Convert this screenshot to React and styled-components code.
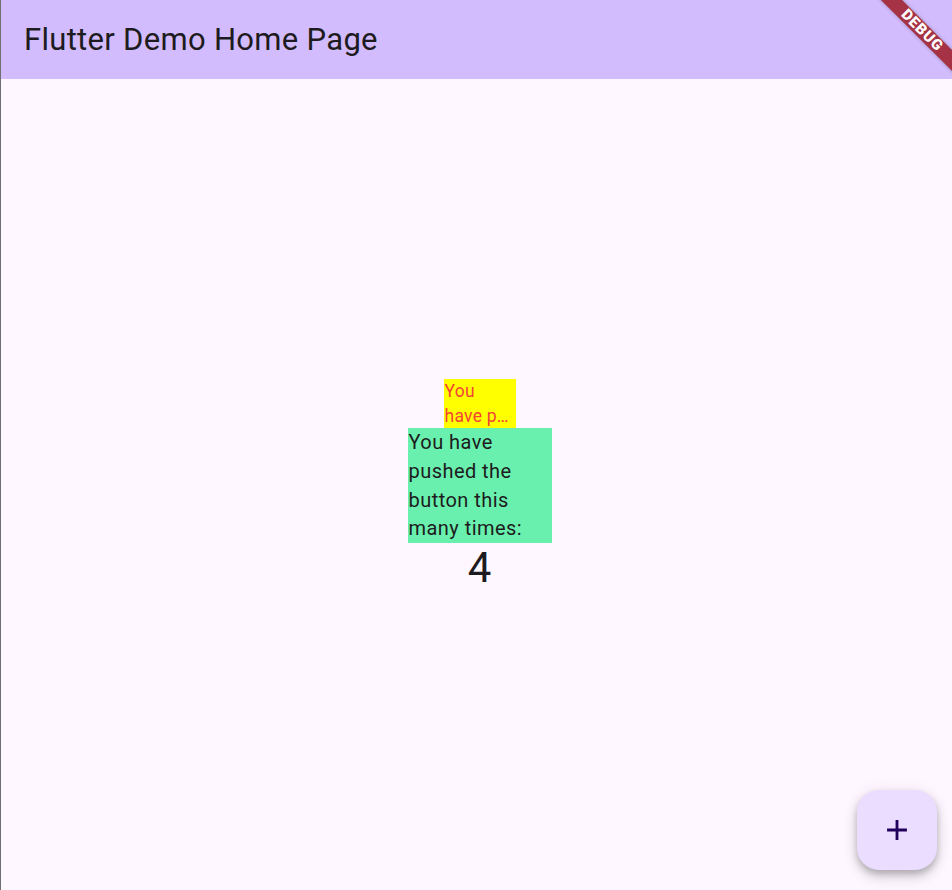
import React, { useState } from "react";
import styled, { createGlobalStyle } from "styled-components";

const Global = createGlobalStyle`
  html, body { margin: 0; padding: 0; background: #fef7ff; }
  body { font-family: Roboto, "Noto Sans", sans-serif; }
`;

const Page = styled.div`
  position: relative;
  width: 100vw;
  height: 890px;
  box-sizing: border-box;
  border-left: 1px solid #6f6f72;
  background: #fef7ff;
  display: flex;
  flex-direction: column;
  overflow: hidden;
`;

const AppBar = styled.header`
  height: 79px;
  flex: none;
  background: #d2bcfd;
  display: flex;
  align-items: center;
  padding-left: 23px;
`;

const Title = styled.h1`
  margin: 0;
  font-family: Roboto, sans-serif;
  font-weight: 400;
  font-size: 31px;
  letter-spacing: 0.3px;
  line-height: 1;
  color: #1d1b20;
`;

const Body = styled.main`
  flex: 1;
  display: flex;
  align-items: center;
  justify-content: center;
  padding-left: 6px;
`;

const Column = styled.div`
  display: flex;
  flex-direction: column;
  align-items: center;
`;

const Tag = styled.div`
  width: 72px;
  height: 49px;
  background: #ffff00;
  color: #f44336;
  font-size: 17.5px;
  letter-spacing: 0.25px;
  line-height: 24.5px;
  padding-left: 1px;
  box-sizing: border-box;
  overflow: hidden;
`;

const Line = styled.div`
  white-space: nowrap;
`;

const Message = styled.div`
  width: 144px;
  background: #69f0ae;
  color: #1d1b20;
  font-size: 20px;
  letter-spacing: 0.45px;
  line-height: 28.75px;
  padding-left: 1px;
  box-sizing: border-box;
`;

const Count = styled.div`
  font-size: 42px;
  line-height: 45px;
  padding-top: 2px;
  color: #1d1b20;
`;

const Fab = styled.button`
  position: absolute;
  right: 15px;
  bottom: 20px;
  width: 80px;
  height: 80px;
  border: none;
  border-radius: 22px;
  background: #eaddff;
  color: #21005d;
  display: flex;
  align-items: center;
  justify-content: center;
  cursor: pointer;
  box-shadow: 0 4px 6px rgba(0, 0, 0, 0.18), 0 8px 14px rgba(0, 0, 0, 0.12),
    0 1px 16px rgba(0, 0, 0, 0.08);
`;

const Banner = styled.div`
  position: absolute;
  top: 23px;
  right: -30px;
  width: 120px;
  height: 15px;
  transform: rotate(45deg);
  background: #a63345;
  color: #fff;
  font-family: Roboto, sans-serif;
  font-weight: 900;
  font-size: 15px;
  line-height: 15px;
  letter-spacing: 0.8px;
  text-align: center;
  box-shadow: 0 0 4px rgba(0, 0, 0, 0.25);
`;

export default function App() {
  const [count, setCount] = useState(4);
  return (
    <>
      <Global />
      <Page>
        <AppBar>
          <Title>Flutter Demo Home Page</Title>
        </AppBar>
        <Body>
          <Column>
            <Tag title="You have pushed the button this many times:">
              <Line>You</Line>
              <Line>have p…</Line>
            </Tag>
            <Message>You have pushed the button this many times:</Message>
            <Count>{count}</Count>
          </Column>
        </Body>
        <Fab aria-label="Increment" onClick={() => setCount((c) => c + 1)}>
          <svg width="34" height="34" viewBox="0 0 24 24" fill="currentColor">
            <path d="M19 13h-6v6h-2v-6H5v-2h6V5h2v6h6v2z" />
          </svg>
        </Fab>
        <Banner>DEBUG</Banner>
      </Page>
    </>
  );
}
